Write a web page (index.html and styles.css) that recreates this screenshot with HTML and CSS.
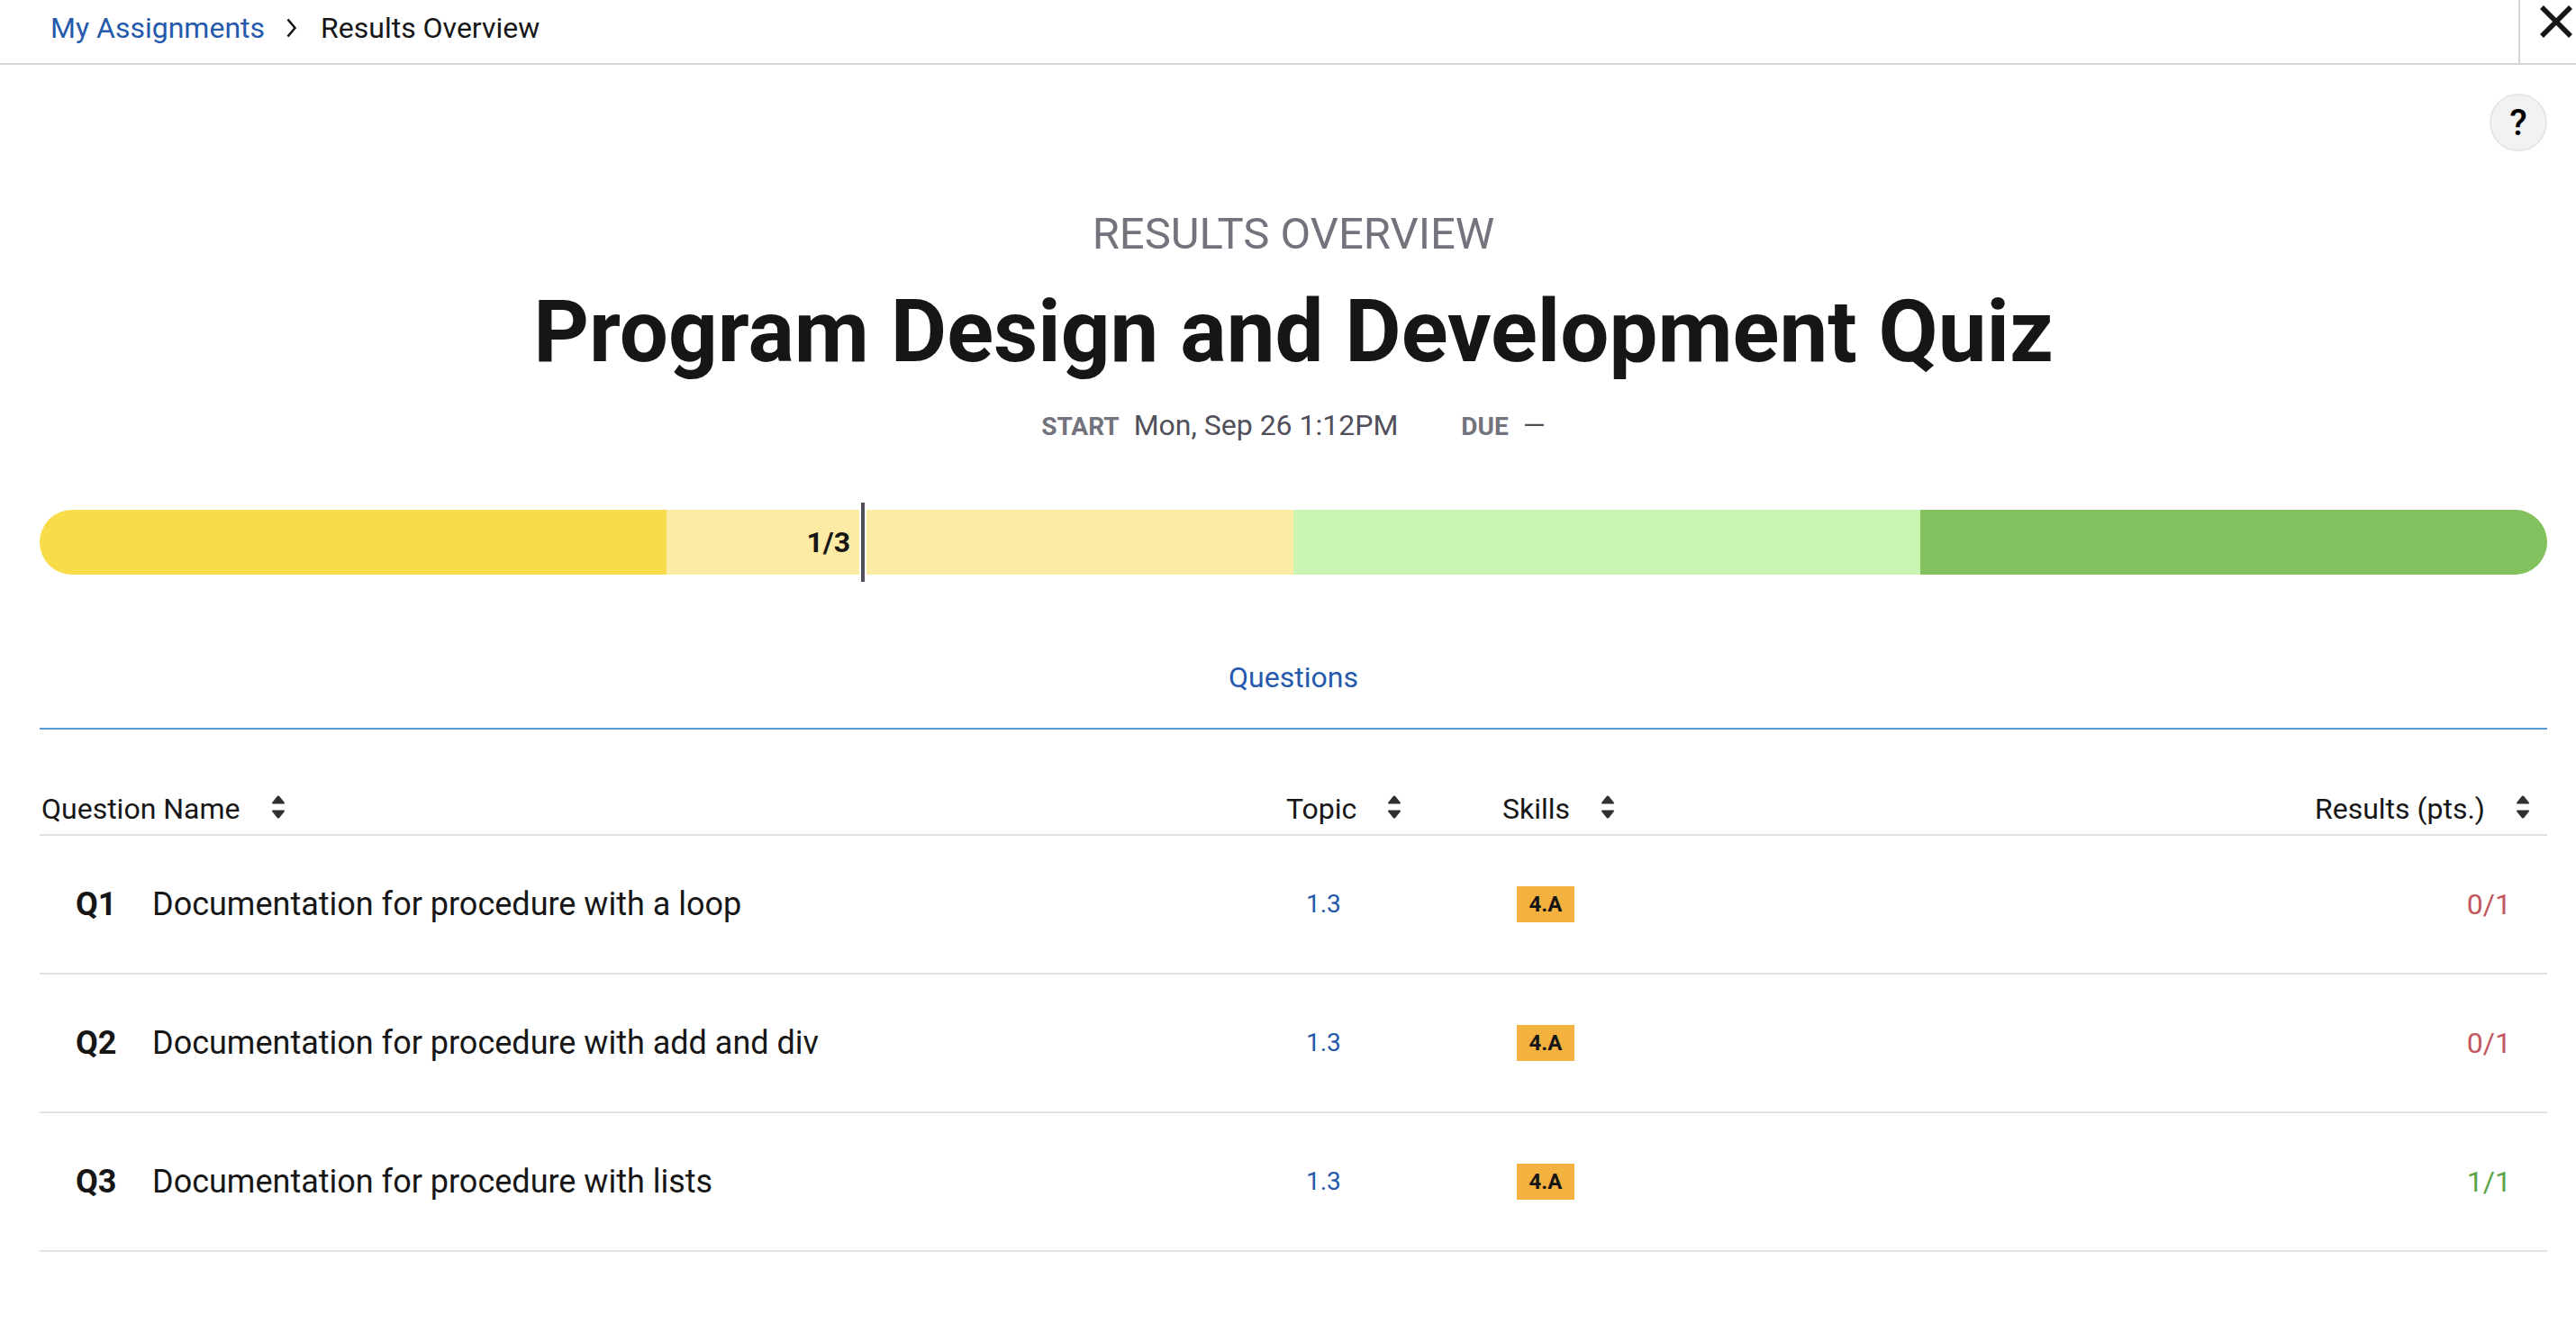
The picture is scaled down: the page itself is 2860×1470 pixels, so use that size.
FILE: index.html
```html
<!DOCTYPE html>
<html lang="en">
<head>
  <meta charset="utf-8">
  <title>Results Overview</title>
  <meta name="viewport" content="width=device-width, initial-scale=1">
  <link rel="stylesheet" href="styles.css">
</head>
<body>
  <svg class="sprite" aria-hidden="true">
    <symbol id="sort" viewBox="0 0 16 26">
      <path d="M1 8.2 7 .8Q8 0 9 .8L15 8.200Q15.200 9.600 14 9.600H2Q.8 9.600 1 8.200ZM1 17.800 7 25.200Q8 26 9 25.200L15 17.800Q15.200 16.400 14 16.400H2Q.8 16.400 1 17.800Z" fill="currentColor"/>
    </symbol>
  </svg>

  <header class="topbar">
    <nav class="breadcrumb" aria-label="Breadcrumb">
      <a class="link" href="#">My Assignments</a>
      <svg class="chevron" viewBox="0 0 12 22" aria-hidden="true"><path d="M1.500 1.500 9.500 11 1.500 20.500" fill="none" stroke="currentColor" stroke-width="2.600"/></svg>
      <span>Results Overview</span>
    </nav>
    <button class="close" type="button" aria-label="Close">
      <svg class="close-icon" viewBox="0 0 38 38" aria-hidden="true"><path d="M3 3 35 35M35 3 3 35" fill="none" stroke="currentColor" stroke-width="5.500"/></svg>
    </button>
  </header>

  <main class="page">
    <div class="tools">
      <button class="help" type="button" aria-label="Help">?</button>
    </div>

    <section class="intro">
      <p class="eyebrow">Results Overview</p>
      <h1 class="title">Program Design and Development Quiz</h1>
      <dl class="dates">
        <div class="date"><dt>Start</dt><dd>Mon, Sep 26 1:12PM</dd></div>
        <div class="date"><dt>Due</dt><dd>—</dd></div>
      </dl>
    </section>

    <div class="score" role="img" aria-label="Score 1 of 3">
      <div class="band band-1"></div>
      <div class="band band-2"></div>
      <div class="band band-3"></div>
      <div class="band band-4"></div>
      <div class="marker" style="width: 33.333%"><span>1/3</span><i class="tick"></i></div>
    </div>

    <nav class="tabs" aria-label="Results">
      <a class="link" href="#questions">Questions</a>
    </nav>

    <table class="questions" id="questions">
      <thead>
        <tr>
          <th class="col-name" scope="col"><button class="sort" type="button">Question Name<svg class="sort-icon" aria-hidden="true"><use href="#sort"/></svg></button></th>
          <th class="col-topic" scope="col"><button class="sort" type="button">Topic<svg class="sort-icon" aria-hidden="true"><use href="#sort"/></svg></button></th>
          <th class="col-skills" scope="col"><button class="sort" type="button">Skills<svg class="sort-icon" aria-hidden="true"><use href="#sort"/></svg></button></th>
          <th class="col-results" scope="col"><button class="sort" type="button">Results (pts.)<svg class="sort-icon" aria-hidden="true"><use href="#sort"/></svg></button></th>
        </tr>
      </thead>
      <tbody>
        <tr>
          <td class="name"><b class="number">Q1</b>Documentation for procedure with a loop</td>
          <td class="topic"><a class="link" href="#">1.3</a></td>
          <td class="skills"><span class="badge">4.A</span></td>
          <td class="result wrong">0/1</td>
        </tr>
        <tr>
          <td class="name"><b class="number">Q2</b>Documentation for procedure with add and div</td>
          <td class="topic"><a class="link" href="#">1.3</a></td>
          <td class="skills"><span class="badge">4.A</span></td>
          <td class="result wrong">0/1</td>
        </tr>
        <tr>
          <td class="name"><b class="number">Q3</b>Documentation for procedure with lists</td>
          <td class="topic"><a class="link" href="#">1.3</a></td>
          <td class="skills"><span class="badge">4.A</span></td>
          <td class="result right">1/1</td>
        </tr>
      </tbody>
    </table>
  </main>
</body>
</html>
```
FILE: styles.css
```css
* {
  box-sizing: border-box;
}

body {
  margin: 0;
  background: #fff;
  color: #161617;
  font: 32px/40px Roboto, "Liberation Sans", sans-serif;
}

button {
  padding: 0;
  border: 0;
  background: none;
  color: inherit;
  font: inherit;
  cursor: pointer;
}

.link {
  color: #2459ab;
  text-decoration: none;
}

.sprite {
  display: none;
}

/* Top bar */
.topbar {
  display: flex;
  justify-content: space-between;
  height: 72px;
  border-bottom: 2px solid #d5d4d9;
}

.breadcrumb {
  display: flex;
  align-items: center;
  padding: 0 0 8px 56px;
}

.chevron {
  width: 12px;
  height: 22px;
  margin: 0 26px 0 24px;
}

.close {
  display: flex;
  align-items: flex-start;
  justify-content: flex-end;
  width: 64px;
  padding: 5px 3px 0 0;
  border-left: 2px solid #d5d4d9;
}

.close-icon {
  width: 38px;
  height: 38px;
}

/* Page */
.page {
  padding: 32px 32px 80px 44px;
}

.tools {
  display: flex;
  justify-content: flex-end;
}

.help {
  width: 64px;
  height: 64px;
  padding-top: 2px;
  border: 2px solid #e6e6e6;
  border-radius: 50%;
  background: #f2f2f2;
  color: #000;
  font-size: 40px;
  font-weight: 500;
}

.intro {
  padding-top: 60px;
  text-align: center;
}

.eyebrow {
  margin: 0;
  color: #73737d;
  font-size: 49px;
  line-height: 64px;
  text-transform: uppercase;
}

.title {
  margin: 16px 0 0;
  font-size: 96px;
  line-height: 120px;
  font-weight: 700;
}

.dates {
  display: flex;
  justify-content: center;
  gap: 70px;
  margin: 24px 0 0;
}

.date {
  display: flex;
  align-items: baseline;
  gap: 16px;
}

.date dt {
  color: #73737d;
  font-size: 28px;
  font-weight: 700;
  text-transform: uppercase;
}

.date dd {
  margin: 0;
  color: #504f5a;
}

/* Score bar */
.score {
  position: relative;
  display: grid;
  grid-template-columns: repeat(4, 1fr);
  height: 72px;
  margin-top: 72px;
}

.band-1 {
  border-radius: 36px 0 0 36px;
  background: #f8dc4a;
}

.band-2 {
  background: #fceba4;
}

.band-3 {
  background: #caf4b2;
}

.band-4 {
  border-radius: 0 36px 36px 0;
  background: #82c15d;
}

.marker {
  position: absolute;
  top: -8px;
  bottom: -8px;
  left: 0;
  display: flex;
  align-items: center;
  justify-content: flex-end;
  gap: 10px;
  padding-right: 10px;
  font-weight: 700;
}

.tick {
  align-self: stretch;
  width: 8px;
  border: solid #fff;
  border-width: 0 2px;
  background: #504f5a;
}

/* Tabs */
.tabs {
  display: flex;
  justify-content: center;
  margin-top: 94px;
  padding-bottom: 36px;
  border-bottom: 2px solid #5b9bd3;
}

/* Questions table */
.questions {
  width: 100%;
  table-layout: fixed;
  border-collapse: separate;
  border-spacing: 0;
}

.questions th,
.questions td {
  padding: 0;
  border-bottom: 2px solid #e3e3e5;
  text-align: left;
}

.questions th {
  height: 118px;
  padding: 0 2px 8px;
  vertical-align: bottom;
  font-weight: 400;
}

.questions td {
  height: 154px;
}

.col-name {
  width: 1382px;
}

.col-topic {
  width: 240px;
}

.col-skills {
  width: 320px;
}

.sort {
  display: inline-flex;
  align-items: center;
  gap: 34px;
}

.sort-icon {
  width: 16px;
  height: 26px;
  margin-bottom: 4px;
  color: #303033;
}

.questions .col-results {
  padding-right: 19px;
  text-align: right;
}

.questions .name {
  padding-left: 40px;
  font-size: 36px;
}

.number {
  display: inline-block;
  width: 85px;
}

.questions .topic {
  padding-left: 24px;
  font-size: 28px;
}

.questions .skills {
  padding-left: 18px;
}

.badge {
  display: block;
  width: 64px;
  background: #f3b13f;
  font-size: 24px;
  font-weight: 700;
  text-align: center;
}

.questions .result {
  padding-right: 40px;
  text-align: right;
}

.questions .wrong {
  color: #c2575f;
}

.questions .right {
  color: #5ba348;
}
```
